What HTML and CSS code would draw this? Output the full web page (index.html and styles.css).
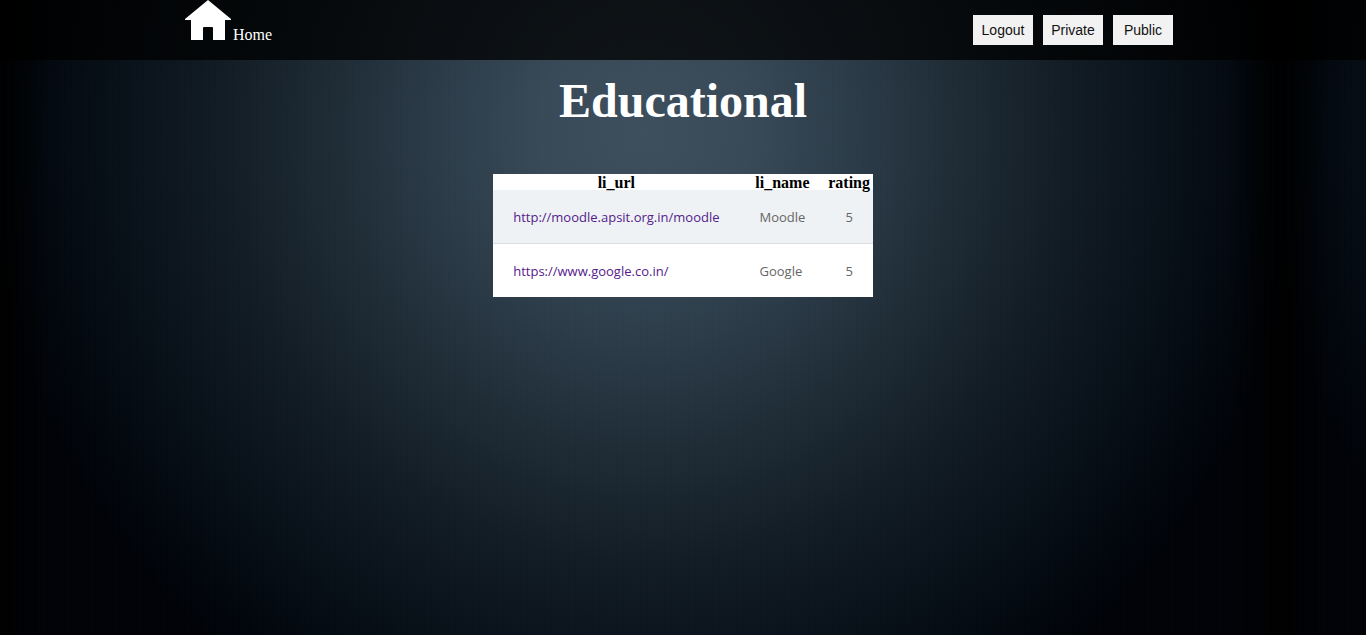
FILE: index.html
```html
<!DOCTYPE html>
<html lang="en">
<head>
<meta charset="utf-8">
<title>Educational</title>
<link rel="stylesheet" href="styles.css">
</head>
<body>
<header class="topbar">
  <div class="topbar-inner">
    <a class="home" href="#">
      <svg class="home-icon" viewBox="0 0 50 40" aria-hidden="true"><path fill="#fff" d="M25 0 48 19V20H42V40H30V28Q30 27 29 27H21Q20 27 20 28V40H8V20H2V19Z"/></svg>
      <span>Home</span>
    </a>
    <nav class="actions">
      <button class="action" type="button">Logout</button>
      <button class="action" type="button">Private</button>
      <button class="action" type="button">Public</button>
    </nav>
  </div>
</header>
<main class="content">
  <h1 class="title">Educational</h1>
  <table class="links">
    <thead>
      <tr><th scope="col">li_url</th><th scope="col">li_name</th><th scope="col">rating</th></tr>
    </thead>
    <tbody>
      <tr><td><a href="#">http://moodle.apsit.org.in/moodle</a></td><td>Moodle</td><td>5</td></tr>
      <tr><td><a href="#">https://www.google.co.in/</a></td><td>Google</td><td>5</td></tr>
    </tbody>
  </table>
</main>
</body>
</html>
```
FILE: styles.css
```css
* {
  box-sizing: border-box;
}

body {
  margin: 0;
  min-height: 100vh;
  font-family: "Liberation Serif", "Times New Roman", serif;
  font-size: 16px;
  line-height: 1;
  background-color: #000;
  background-image:
    repeating-linear-gradient(90deg, rgba(255, 255, 255, 0.008) 0 1px, transparent 1px 3px),
    linear-gradient(90deg, #000 0, transparent 50px, transparent 1230px, #000 1280px),
    radial-gradient(660px 680px at 645px 130px, #3d4e5d 0%, #384957 16%, #2b3b48 32%, #1e2b35 48%, #121c24 64%, #09121a 78%, #030910 90%, #000207 100%);
  background-size: 1280px 100%;
  background-repeat: repeat-x;
}

.topbar {
  background: rgba(0, 0, 0, 0.75);
}

.topbar-inner {
  display: flex;
  justify-content: space-between;
  max-width: 1000px;
  height: 60px;
  margin: 0 auto;
}

.home {
  display: flex;
  align-items: baseline;
  align-self: flex-start;
  color: #fff;
  text-decoration: none;
}

.home-icon {
  width: 50px;
  height: 40px;
}

.actions {
  display: flex;
  align-items: center;
  gap: 10px;
  padding-right: 10px;
}

.action {
  width: 60px;
  height: 30px;
  padding: 0;
  border: 0;
  background: #f2f2f2;
  color: #111;
  font-family: "Liberation Sans", Arial, sans-serif;
  font-size: 14px;
}

.content {
  display: flex;
  flex-direction: column;
  align-items: center;
  gap: 48px;
  padding-top: 16px;
}

.title {
  margin: 0;
  color: #fff;
  font-size: 48px;
  line-height: 50px;
}

.links {
  border-collapse: collapse;
  border-spacing: 0;
  background: #fff;
}

.links th {
  padding: 2px 0 0;
  color: #000;
  line-height: 14px;
}

.links td {
  padding: 21px 20px 19px;
  color: #666;
  font-family: "Open Sans", sans-serif;
  font-size: 13px;
}

.links tbody tr:nth-child(odd) {
  background: #eef2f5;
}

.links tbody tr + tr td {
  border-top: 1px solid #ddd;
}

.links a {
  color: #551a8b;
  text-decoration: none;
}
```
